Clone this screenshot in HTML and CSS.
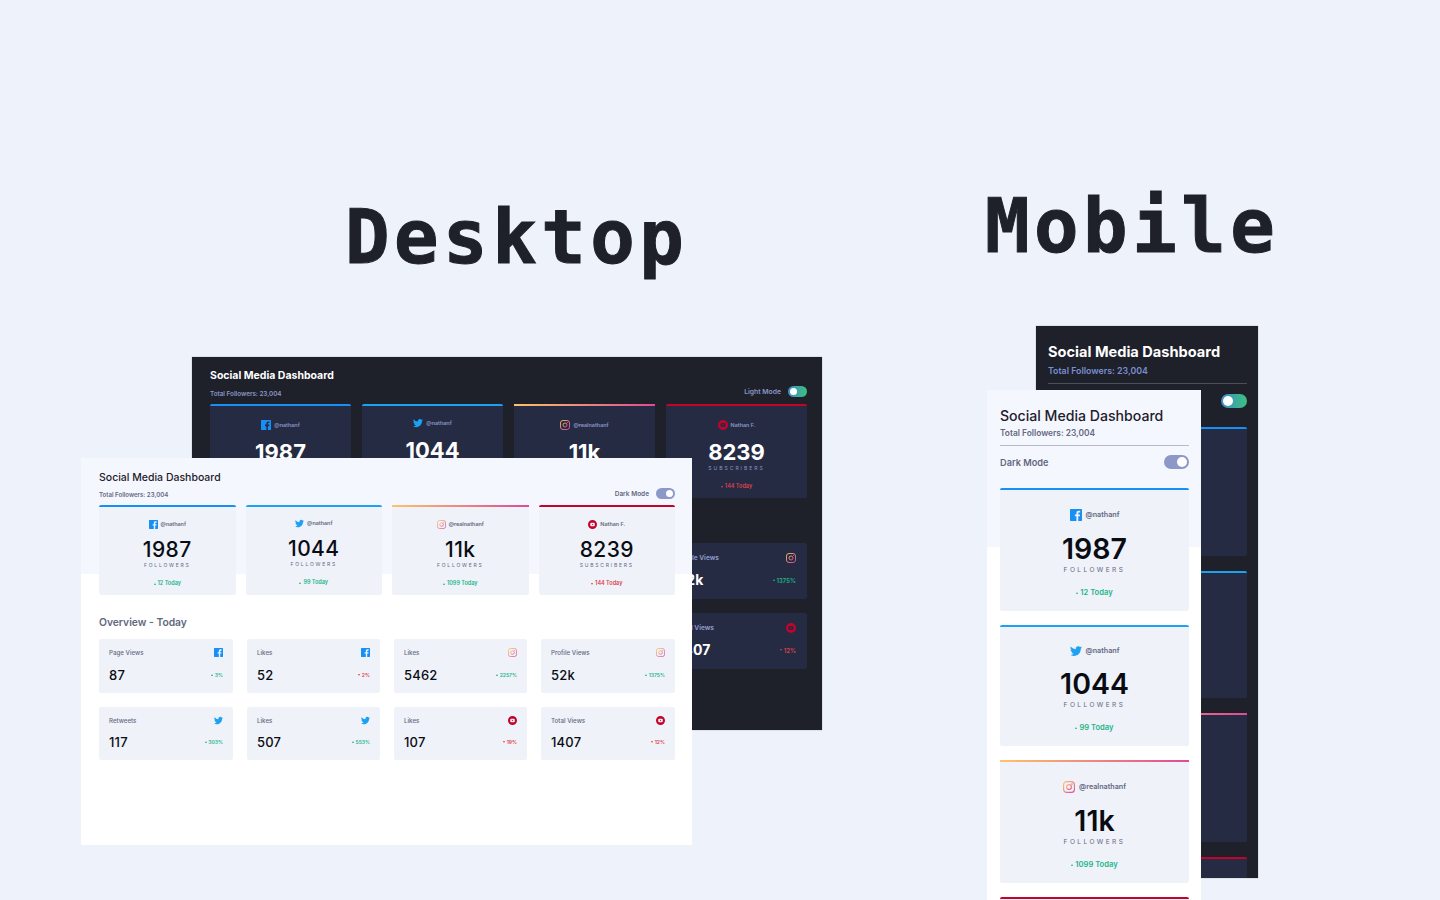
FILE: index.html
```html
<!DOCTYPE html>
<html lang="en">
<head>
  <meta charset="UTF-8" />
  <meta name="viewport" content="width=device-width, initial-scale=1.0"/>
  <title>Social Media Dashboard</title>
  <link rel="stylesheet" href="styles.css">
</head>
<body>
  <!-- shared icons -->
  <svg class="defs" width="0" height="0">
    <defs>
      <linearGradient id="igGrad" x1="0" y1="0" x2="1" y2="1">
        <stop offset="0" stop-color="#fdc468"/>
        <stop offset="1" stop-color="#df4996"/>
      </linearGradient>
      <symbol id="fb" viewBox="0 0 20 20">
        <path fill="#178ff5" d="M18.896 0H1.104C.494 0 0 .494 0 1.104v17.792C0 19.506.494 20 1.104 20h9.58v-7.745H8.076V9.237h2.606V7.01c0-2.583 1.578-3.99 3.883-3.99 1.104 0 2.052.082 2.329.119v2.7h-1.598c-1.254 0-1.496.597-1.496 1.47v1.928h2.989l-.39 3.018h-2.6V20h5.098c.608 0 1.102-.494 1.102-1.104V1.104C20 .494 19.506 0 18.896 0z"/>
      </symbol>
      <symbol id="tw" viewBox="0 0 20 20">
        <path fill="#1da1f2" d="M20 3.924a8.2 8.2 0 0 1-2.357.646 4.11 4.11 0 0 0 1.804-2.27 8.22 8.22 0 0 1-2.605.996A4.1 4.1 0 0 0 9.85 7.04 11.65 11.65 0 0 1 1.392 2.75a4.1 4.1 0 0 0 1.27 5.477 4.09 4.09 0 0 1-1.858-.513v.052a4.1 4.1 0 0 0 3.292 4.023 4.1 4.1 0 0 1-1.853.07 4.11 4.11 0 0 0 3.833 2.85A8.23 8.23 0 0 1 0 16.41a11.62 11.62 0 0 0 6.29 1.84c7.547 0 11.675-6.253 11.675-11.675l-.013-.53A8.3 8.3 0 0 0 20 3.924z"/>
      </symbol>
      <symbol id="ig" viewBox="0 0 20 20">
        <rect x="1" y="1" width="18" height="18" rx="5" fill="none" stroke="url(#igGrad)" stroke-width="1.8"/>
        <circle cx="10" cy="10" r="4" fill="none" stroke="url(#igGrad)" stroke-width="1.8"/>
        <circle cx="15" cy="5" r="1.1" fill="#df4996"/>
      </symbol>
      <symbol id="yt" viewBox="0 0 20 20">
        <path fill="#c4032b" fill-rule="evenodd" d="M10 0a10 10 0 1 0 0 20a10 10 0 1 0 0-20z M7 6.2h6a2 2 0 0 1 2 2v3.6a2 2 0 0 1-2 2H7a2 2 0 0 1-2-2V8.200a2 2 0 0 1 2-2z"/>
        <path fill="#c4032b" d="M8.7 8.100v3.800l3.200-1.900z"/>
      </symbol>
    </defs>
  </svg>

  <h1 class="heading heading-desktop">Desktop</h1>
  <h1 class="heading heading-mobile">Mobile</h1>

  <!-- desktop, dark -->
  <section class="window desk dark desk-dark">
    <div class="top">
      <div>
        <h2>Social Media Dashboard</h2>
        <p class="total">Total Followers: 23,004</p>
      </div>
      <div class="mode"><span>Light Mode</span><i class="toggle"></i></div>
    </div>
    <div class="cards">
      <div class="card fb"><div class="who"><svg class="ico"><use href="#fb"/></svg>@nathanf</div><div class="num">1987</div><div class="unit">FOLLOWERS</div><div class="today up"><b></b>12 Today</div></div>
      <div class="card tw"><div class="who"><svg class="ico"><use href="#tw"/></svg>@nathanf</div><div class="num">1044</div><div class="unit">FOLLOWERS</div><div class="today up"><b></b>99 Today</div></div>
      <div class="card ig"><div class="who"><svg class="ico"><use href="#ig"/></svg>@realnathanf</div><div class="num">11k</div><div class="unit">FOLLOWERS</div><div class="today up"><b></b>1099 Today</div></div>
      <div class="card yt"><div class="who"><svg class="ico"><use href="#yt"/></svg>Nathan F.</div><div class="num">8239</div><div class="unit">SUBSCRIBERS</div><div class="today down"><b></b>144 Today</div></div>
    </div>
    <h3>Overview - Today</h3>
    <div class="stats">
      <div class="stat"><div class="line"><span class="name">Page Views</span><svg class="ico"><use href="#fb"/></svg></div><div class="line"><span class="val">87</span><span class="pct up"><b></b>3%</span></div></div>
      <div class="stat"><div class="line"><span class="name">Likes</span><svg class="ico"><use href="#fb"/></svg></div><div class="line"><span class="val">52</span><span class="pct down"><b></b>2%</span></div></div>
      <div class="stat"><div class="line"><span class="name">Likes</span><svg class="ico"><use href="#ig"/></svg></div><div class="line"><span class="val">5462</span><span class="pct up"><b></b>2257%</span></div></div>
      <div class="stat"><div class="line"><span class="name">Profile Views</span><svg class="ico"><use href="#ig"/></svg></div><div class="line"><span class="val">52k</span><span class="pct up"><b></b>1375%</span></div></div>
      <div class="stat"><div class="line"><span class="name">Retweets</span><svg class="ico"><use href="#tw"/></svg></div><div class="line"><span class="val">117</span><span class="pct up"><b></b>303%</span></div></div>
      <div class="stat"><div class="line"><span class="name">Likes</span><svg class="ico"><use href="#tw"/></svg></div><div class="line"><span class="val">507</span><span class="pct up"><b></b>553%</span></div></div>
      <div class="stat"><div class="line"><span class="name">Likes</span><svg class="ico"><use href="#yt"/></svg></div><div class="line"><span class="val">107</span><span class="pct down"><b></b>19%</span></div></div>
      <div class="stat"><div class="line"><span class="name">Total Views</span><svg class="ico"><use href="#yt"/></svg></div><div class="line"><span class="val">1407</span><span class="pct down"><b></b>12%</span></div></div>
    </div>
  </section>

  <!-- desktop, light -->
  <section class="window desk light desk-light">
    <div class="top">
      <div>
        <h2>Social Media Dashboard</h2>
        <p class="total">Total Followers: 23,004</p>
      </div>
      <div class="mode"><span>Dark Mode</span><i class="toggle"></i></div>
    </div>
    <div class="cards">
      <div class="card fb"><div class="who"><svg class="ico"><use href="#fb"/></svg>@nathanf</div><div class="num">1987</div><div class="unit">FOLLOWERS</div><div class="today up"><b></b>12 Today</div></div>
      <div class="card tw"><div class="who"><svg class="ico"><use href="#tw"/></svg>@nathanf</div><div class="num">1044</div><div class="unit">FOLLOWERS</div><div class="today up"><b></b>99 Today</div></div>
      <div class="card ig"><div class="who"><svg class="ico"><use href="#ig"/></svg>@realnathanf</div><div class="num">11k</div><div class="unit">FOLLOWERS</div><div class="today up"><b></b>1099 Today</div></div>
      <div class="card yt"><div class="who"><svg class="ico"><use href="#yt"/></svg>Nathan F.</div><div class="num">8239</div><div class="unit">SUBSCRIBERS</div><div class="today down"><b></b>144 Today</div></div>
    </div>
    <h3>Overview - Today</h3>
    <div class="stats">
      <div class="stat"><div class="line"><span class="name">Page Views</span><svg class="ico"><use href="#fb"/></svg></div><div class="line"><span class="val">87</span><span class="pct up"><b></b>3%</span></div></div>
      <div class="stat"><div class="line"><span class="name">Likes</span><svg class="ico"><use href="#fb"/></svg></div><div class="line"><span class="val">52</span><span class="pct down"><b></b>2%</span></div></div>
      <div class="stat"><div class="line"><span class="name">Likes</span><svg class="ico"><use href="#ig"/></svg></div><div class="line"><span class="val">5462</span><span class="pct up"><b></b>2257%</span></div></div>
      <div class="stat"><div class="line"><span class="name">Profile Views</span><svg class="ico"><use href="#ig"/></svg></div><div class="line"><span class="val">52k</span><span class="pct up"><b></b>1375%</span></div></div>
      <div class="stat"><div class="line"><span class="name">Retweets</span><svg class="ico"><use href="#tw"/></svg></div><div class="line"><span class="val">117</span><span class="pct up"><b></b>303%</span></div></div>
      <div class="stat"><div class="line"><span class="name">Likes</span><svg class="ico"><use href="#tw"/></svg></div><div class="line"><span class="val">507</span><span class="pct up"><b></b>553%</span></div></div>
      <div class="stat"><div class="line"><span class="name">Likes</span><svg class="ico"><use href="#yt"/></svg></div><div class="line"><span class="val">107</span><span class="pct down"><b></b>19%</span></div></div>
      <div class="stat"><div class="line"><span class="name">Total Views</span><svg class="ico"><use href="#yt"/></svg></div><div class="line"><span class="val">1407</span><span class="pct down"><b></b>12%</span></div></div>
    </div>
  </section>

  <!-- mobile, dark -->
  <section class="window mob dark mob-dark">
    <h2>Social Media Dashboard</h2>
    <p class="total">Total Followers: 23,004</p>
    <div class="mode"><span>Light Mode</span><i class="toggle"></i></div>
    <div class="cards">
      <div class="card fb"></div>
      <div class="card tw"></div>
      <div class="card ig"></div>
      <div class="card yt"></div>
    </div>
  </section>

  <!-- mobile, light -->
  <section class="window mob light mob-light">
    <h2>Social Media Dashboard</h2>
    <p class="total">Total Followers: 23,004</p>
    <div class="mode"><span>Dark Mode</span><i class="toggle"></i></div>
    <div class="cards">
      <div class="card fb"><div class="who"><svg class="ico"><use href="#fb"/></svg>@nathanf</div><div class="num">1987</div><div class="unit">FOLLOWERS</div><div class="today up"><b></b>12 Today</div></div>
      <div class="card tw"><div class="who"><svg class="ico"><use href="#tw"/></svg>@nathanf</div><div class="num">1044</div><div class="unit">FOLLOWERS</div><div class="today up"><b></b>99 Today</div></div>
      <div class="card ig"><div class="who"><svg class="ico"><use href="#ig"/></svg>@realnathanf</div><div class="num">11k</div><div class="unit">FOLLOWERS</div><div class="today up"><b></b>1099 Today</div></div>
      <div class="card yt"></div>
    </div>
  </section>
</body>
</html>
```

FILE: styles.css
```css
* {
  box-sizing: border-box;
  margin: 0;
}
body {
  position: relative;
  width: 1440px;
  height: 900px;
  overflow: hidden;
  background-color: #eef2fa;
  font-family: Inter, "Liberation Sans", sans-serif;
}
.defs {
  position: absolute;
}
.heading {
  position: absolute;
  color: #1e202a;
  font-family: "DejaVu Sans Mono", monospace;
  font-weight: 700;
  font-size: 74px;
  line-height: 90px;
  letter-spacing: 4.5px;
  -webkit-text-stroke: 1px #1e202a;
}
.heading-desktop {
  left: 345px;
  top: 192px;
}
.heading-mobile {
  left: 985px;
  top: 181px;
}

/* windows sit freely on the canvas */
.window {
  position: absolute;
  overflow: hidden;
}
.desk-dark {
  left: 192px;
  top: 357px;
  width: 630px;
  height: 373px;
  padding: 12px 15px 0 18px;
}
.desk-light {
  left: 81px;
  top: 458px;
  width: 611px;
  height: 387px;
  padding: 13px 17px 0 18px;
}
.mob-dark {
  left: 1036px;
  top: 326px;
  width: 222px;
  height: 552px;
  padding: 17px 11px 0 12px;
}
.mob-light {
  left: 987px;
  top: 390px;
  width: 214px;
  height: 510px;
  padding: 16px 12px 0 13px;
}
.dark {
  background: #1e202a;
  box-shadow: 0 0 1px #8a8c94;
  color: #fff;
}
.light {
  background: linear-gradient(#f5f7ff 116px, #fff 116px);
  color: #1e202a;
}
.mob-light {
  background: linear-gradient(#f5f7ff 157px, #fff 157px);
}

/* header */
.top {
  display: flex;
  justify-content: space-between;
  align-items: flex-end;
}
h2 {
  font-weight: 600;
  font-size: 10.5px;
  line-height: 13px;
}
.dark h2 {
  font-weight: 700;
}
.light h2 {
  font-weight: 500;
}
.total {
  margin-top: 7px;
  font-size: 6.1px;
  line-height: 8px;
  font-weight: 600;
  color: #63687e;
}
.dark .total {
  margin-top: 8px;
  font-size: 6.3px;
  color: #8b97c6;
}
.mode {
  display: flex;
  align-items: center;
  gap: 7px;
  font-size: 6.5px;
  font-weight: 600;
  color: #63687e;
}
.dark .mode {
  margin-bottom: 1px;
  font-size: 6.8px;
  color: #8b97c6;
}
.toggle {
  display: flex;
  justify-content: flex-end;
  align-items: center;
  width: 19px;
  height: 11px;
  padding: 0 2px;
  border-radius: 6px;
  background: #8c98c8;
}
.toggle::after {
  content: "";
  width: 7px;
  height: 7px;
  border-radius: 50%;
  background: #fff;
}
.dark .toggle {
  justify-content: flex-start;
  background: linear-gradient(90deg, #3e8cc8, #3dc07f);
}

/* follower cards */
.cards {
  display: grid;
  grid-template-columns: repeat(4, 1fr);
  gap: 10px;
  margin-top: 6px;
}
.desk-dark .cards {
  gap: 11px;
}
.card {
  display: flex;
  flex-direction: column;
  align-items: center;
  height: 90px;
  padding-top: 13px;
  border-top: 2px solid #178ff5;
  border-radius: 2px;
  background: #eff2f9;
}
.dark .card {
  height: 94px;
  padding-top: 14px;
  background: #252b43;
}
.card.tw {
  border-top-color: #1da1f2;
  padding-top: 12px;
}
.card.ig {
  border-image: linear-gradient(90deg, #fdc468, #df4996) 1;
}
.card.yt {
  border-top-color: #c4032b;
}
.who {
  display: flex;
  align-items: center;
  gap: 3px;
  font-size: 5.4px;
  line-height: 9px;
  font-weight: 600;
  color: #63687e;
}
.dark .who {
  color: #8b97c6;
}
.who .ico {
  width: 9px;
  height: 9px;
}
.dark .who .ico {
  width: 10px;
  height: 10px;
}
.num {
  margin-top: 8px;
  font-size: 21px;
  line-height: 26px;
  font-weight: 500;
  letter-spacing: .4px;
  color: #0a0c14;
}
.dark .num {
  margin-top: 9px;
  color: #fff;
  font-weight: 700;
  font-size: 22px;
  letter-spacing: 0;
}
.unit {
  margin-top: -1px;
  font-size: 5px;
  line-height: 7px;
  letter-spacing: 1.8px;
  color: #63687e;
}
.dark .unit {
  margin-top: 0;
  letter-spacing: 2px;
  color: #8b97c6;
}
.today {
  display: flex;
  align-items: center;
  gap: 2px;
  margin-top: 11px;
  font-size: 5.5px;
  line-height: 7px;
  font-weight: 600;
}
.up {
  color: #1eb589;
}
.down {
  color: #dc414c;
}
.up b, .down b {
  width: 0;
  height: 0;
  border-left: 1.5px solid transparent;
  border-right: 1.5px solid transparent;
}
.up b {
  border-bottom: 2px solid #1eb589;
}
.down b {
  border-top: 2px solid #dc414c;
}

/* overview */
h3 {
  margin-top: 21px;
  font-size: 10.3px;
  line-height: 13px;
  font-weight: 600;
  color: #63687e;
}
.dark h3 {
  color: #fff;
  margin-top: 22px;
}
.stats {
  display: grid;
  grid-template-columns: 134px 133px 133px 134px;
  gap: 14px;
  margin-top: 10px;
}
.desk-dark .stats {
  grid-template-columns: repeat(4, 141px);
  gap: 14px 11px;
}
.stat {
  display: flex;
  flex-direction: column;
  justify-content: space-between;
  height: 53.5px;
  padding: 9px 10px 10px;
  border-radius: 2px;
  background: #eff2f9;
}
.dark .stat {
  height: 56px;
  padding: 10px 11px 11px;
  background: #252b43;
}
.line {
  display: flex;
  justify-content: space-between;
  align-items: center;
}
.stat .ico {
  width: 9px;
  height: 9px;
}
.dark .stat .ico {
  width: 10px;
  height: 10px;
}
.name {
  font-size: 6.2px;
  font-weight: 500;
  color: #63687e;
}
.dark .name {
  font-size: 6.5px;
  font-weight: 700;
  color: #8b97c6;
}
.val {
  font-size: 13px;
  line-height: 16px;
  font-weight: 500;
  letter-spacing: .2px;
  color: #0a0c14;
}
.dark .val {
  font-size: 14px;
  color: #fff;
  font-weight: 700;
}
.pct {
  display: flex;
  align-items: center;
  gap: 1.5px;
  font-size: 5px;
  font-weight: 600;
}
.dark .pct {
  font-size: 6px;
}

/* mobile sizes */
.mob h2 {
  font-size: 14.1px;
  line-height: 19px;
}
.mob-dark h2 {
  font-size: 14.6px;
}
.mob .total {
  margin-top: 3px;
  font-size: 8.4px;
  line-height: 11px;
}
.mob-dark .total {
  font-size: 8.8px;
  color: #7a8fd0;
}
.mob .mode {
  justify-content: space-between;
  margin-top: 6px;
  padding-top: 9px;
  border-top: 1px solid #b8bac9;
  font-size: 9.2px;
}
.mob-dark .mode {
  margin-top: 7px;
  padding-top: 10px;
  border-top-color: #4a4d5a;
}
.mob .toggle {
  width: 25px;
  height: 14px;
  border-radius: 7px;
}
.mob-dark .toggle {
  width: 26px;
}
.mob .toggle::after {
  width: 10px;
  height: 10px;
}
.mob .cards {
  display: flex;
  flex-direction: column;
  gap: 14px;
  margin-top: 19px;
}
.mob-dark .cards {
  gap: 15px;
}
.mob .card {
  flex: none;
  height: 123px;
  padding-top: 19px;
  border-top-width: 2.5px;
}
.mob .card.tw {
  height: 121px;
  padding-top: 18px;
}
.mob .card.yt {
  height: 120px;
}
.mob-dark .card, .mob-dark .card.yt {
  height: 129px;
}
.mob-dark .card.tw {
  height: 127px;
}
.mob .who {
  gap: 4px;
  font-size: 7.2px;
  line-height: 12px;
}
.mob .who .ico {
  width: 12px;
  height: 12px;
}
.mob .num {
  margin-top: 11px;
  font-size: 28.5px;
  line-height: 34px;
  font-weight: 600;
  letter-spacing: 0;
}
.mob .tw .num {
  margin-top: 10px;
}
.mob .unit {
  margin-top: 0;
  font-size: 6.6px;
  line-height: 9px;
  letter-spacing: 2.4px;
}
.mob .today {
  margin-top: 13px;
  font-size: 7.6px;
  line-height: 10px;
}
```
